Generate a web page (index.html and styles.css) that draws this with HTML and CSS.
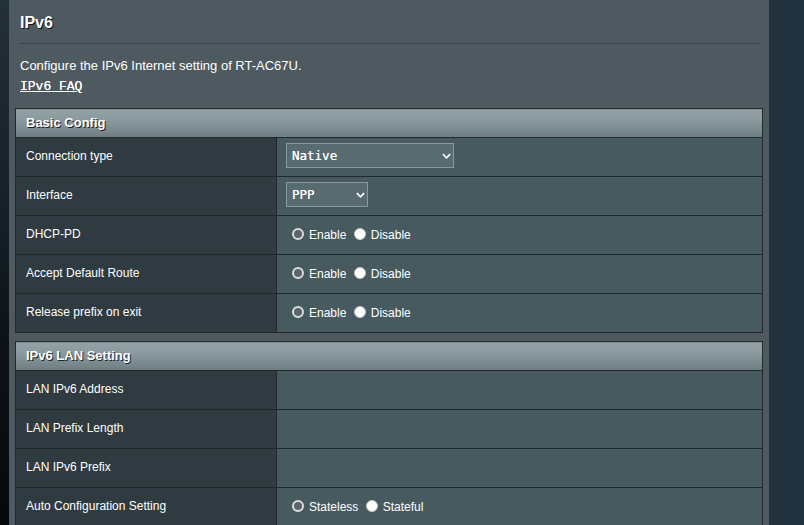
FILE: index.html
```html
<!DOCTYPE html>
<html lang="en">
<head>
<meta charset="utf-8">
<title>IPv6</title>
<link rel="stylesheet" href="styles.css">
</head>
<body>
<div class="page">
  <div class="edge-left"></div>
  <main class="panel">
    <h1 class="title">IPv6</h1>
    <div class="sep"></div>
    <p class="desc">Configure the IPv6 Internet setting of RT-AC67U.</p>
    <a class="faq" href="#">IPv6 FAQ</a>

    <table class="cfg">
      <colgroup><col class="col-label"><col class="col-field"></colgroup>
      <thead>
        <tr><th colspan="2" class="head">Basic Config</th></tr>
      </thead>
      <tbody>
        <tr>
          <th class="label">Connection type</th>
          <td class="field">
            <span class="sel sel-wide">
              <select><option>Native</option></select>
              <svg class="chev" viewBox="0 0 10 6" width="9" height="6"><path d="M1 1 L5 5 L9 1" fill="none" stroke="#fff" stroke-width="2"/></svg>
            </span>
          </td>
        </tr>
        <tr>
          <th class="label">Interface</th>
          <td class="field">
            <span class="sel sel-narrow">
              <select><option>PPP</option></select>
              <svg class="chev" viewBox="0 0 10 6" width="9" height="6"><path d="M1 1 L5 5 L9 1" fill="none" stroke="#fff" stroke-width="2"/></svg>
            </span>
          </td>
        </tr>
        <tr>
          <th class="label">DHCP-PD</th>
          <td class="field">
            <label class="opt"><input type="radio" name="dhcppd" class="radio">Enable</label>
            <label class="opt"><input type="radio" name="dhcppd" class="radio" checked>Disable</label>
          </td>
        </tr>
        <tr>
          <th class="label">Accept Default Route</th>
          <td class="field">
            <label class="opt"><input type="radio" name="defroute" class="radio">Enable</label>
            <label class="opt"><input type="radio" name="defroute" class="radio" checked>Disable</label>
          </td>
        </tr>
        <tr>
          <th class="label">Release prefix on exit</th>
          <td class="field">
            <label class="opt"><input type="radio" name="release" class="radio">Enable</label>
            <label class="opt"><input type="radio" name="release" class="radio" checked>Disable</label>
          </td>
        </tr>
      </tbody>
    </table>

    <table class="cfg cfg-second">
      <colgroup><col class="col-label"><col class="col-field"></colgroup>
      <thead>
        <tr><th colspan="2" class="head">IPv6 LAN Setting</th></tr>
      </thead>
      <tbody>
        <tr><th class="label">LAN IPv6 Address</th><td class="field"></td></tr>
        <tr><th class="label">LAN Prefix Length</th><td class="field"></td></tr>
        <tr><th class="label">LAN IPv6 Prefix</th><td class="field"></td></tr>
        <tr>
          <th class="label">Auto Configuration Setting</th>
          <td class="field">
            <label class="opt"><input type="radio" name="autoconf" class="radio">Stateless</label>
            <label class="opt"><input type="radio" name="autoconf" class="radio" checked>Stateful</label>
          </td>
        </tr>
      </tbody>
    </table>
  </main>
  <div class="gap"></div>
  <div class="edge-right"></div>
</div>
</body>
</html>
```

FILE: styles.css
```css
html, body {
  margin: 0;
  padding: 0;
}

body {
  width: 804px;
  height: 525px;
  overflow: hidden;
  background: #21323e;
  font-family: "Liberation Sans", Arial, sans-serif;
}

.page {
  display: flex;
  height: 525px;
}

.edge-left {
  flex: none;
  width: 9px;
  background: linear-gradient(180deg, #22303a 0%, #17222a 35%, #0b1115 70%, #06090b 100%);
}

.panel {
  flex: none;
  width: 760px;
  box-sizing: border-box;
  padding: 13px 6px 0 6px;
  background: #4e5a60;
  color: #fff;
}

.title {
  margin: 0 0 0 5px;
  font-size: 16px;
  line-height: 20px;
  font-weight: bold;
  text-shadow: 1px 1px 0 #111;
}

.sep {
  margin: 10px 3px 0 5px;
  height: 1px;
  background: #37434a;
}

.desc {
  margin: 14px 0 0 5px;
  font-size: 13px;
  line-height: 16px;
}

.faq {
  display: inline-block;
  margin: 5px 0 0 5px;
  font-family: "Liberation Mono", "Courier New", monospace;
  font-size: 13px;
  line-height: 16px;
  color: #fff;
  text-decoration: underline;
  text-shadow: 0 0 0.3px #fff;
}

.cfg {
  width: 748px;
  margin-top: 13px;
  border-collapse: collapse;
  border: 1px solid #22292d;
  table-layout: fixed;
}

.cfg-second {
  margin-top: 8px;
}

.col-label {
  width: 261px;
}

.cfg th,
.cfg td {
  border: 1px solid #22292d;
}

.head {
  height: 29px;
  padding: 0 0 2px 10px;
  box-sizing: border-box;
  text-align: left;
  font-size: 13px;
  font-weight: bold;
  color: #fff;
  text-shadow: 1px 1px 0 #1e2427;
  background: linear-gradient(180deg, #94a2a7 0%, #8a999e 40%, #6d7d82 100%);
}

.label {
  height: 39px;
  box-sizing: border-box;
  padding: 0 10px 2px 10px;
  text-align: left;
  font-weight: normal;
  font-size: 12px;
  color: #fff;
  background: #2f3b40;
}

.field {
  height: 39px;
  box-sizing: border-box;
  padding: 0 9px 3px 9px;
  background: #475a5f;
  font-size: 12px;
  color: #fff;
}

.sel {
  position: relative;
  display: inline-block;
  vertical-align: middle;
}

.sel select {
  appearance: none;
  -webkit-appearance: none;
  display: block;
  height: 25px;
  margin: 0;
  padding: 0 0 0 5px;
  border: 1px solid #8c989c;
  border-radius: 0;
  background: #576b70;
  color: #fff;
  font-family: "DejaVu Sans Mono", "Lucida Console", monospace;
  font-size: 12.5px;
  text-shadow: 0 0 0.2px #fff;
  outline: none;
}

.sel-wide select {
  width: 168px;
}

.sel-narrow select {
  width: 82px;
}

.chev {
  position: absolute;
  right: 3px;
  top: 10px;
  pointer-events: none;
}

.opt {
  display: inline-block;
  margin-right: -2px;
}

.radio {
  appearance: none;
  -webkit-appearance: none;
  box-sizing: border-box;
  width: 12px;
  height: 12px;
  margin: 3px 5px 0 6px;
  vertical-align: -1px;
  border: 2px solid #dcdcdc;
  border-radius: 50%;
  background: #56666b;
}

.radio:checked {
  border: 1px solid #c8c8c8;
  background: #fff;
}
```
